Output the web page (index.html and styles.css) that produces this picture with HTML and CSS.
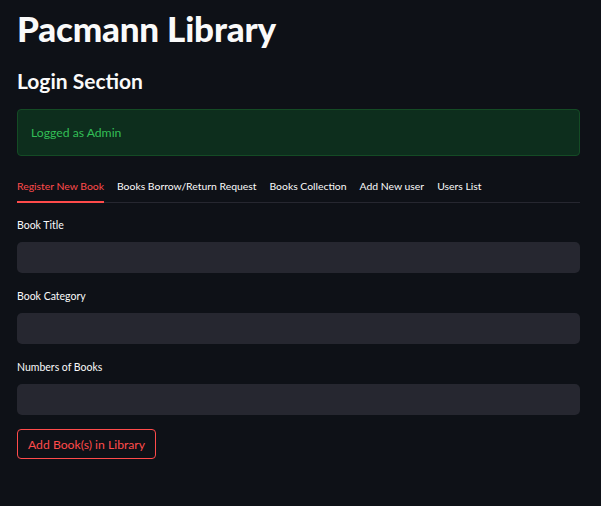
FILE: index.html
```html
<!DOCTYPE html>
<html>
<head>
<meta charset="utf-8">
<link rel="stylesheet" href="styles.css">
</head>
<body>
<main class="page">
  <h1 class="title">Pacmann Library</h1>
  <h3 class="subheader">Login Section</h3>
  <div class="alert">Logged as Admin</div>
  <div class="tabs">
    <div class="tab active">Register New Book</div>
    <div class="tab">Books Borrow/Return Request</div>
    <div class="tab">Books Collection</div>
    <div class="tab">Add New user</div>
    <div class="tab">Users List</div>
  </div>
  <div class="form">
    <label class="field">
      <span class="label">Book Title</span>
      <input class="input" type="text">
    </label>
    <label class="field">
      <span class="label">Book Category</span>
      <input class="input" type="text">
    </label>
    <label class="field">
      <span class="label">Numbers of Books</span>
      <input class="input" type="text">
    </label>
    <div class="actions">
      <button class="btn">Add Book(s) in Library</button>
    </div>
  </div>
</main>
</body>
</html>
```
FILE: styles.css
```css
html, body {
  margin: 0;
  padding: 0;
  background: #0e1117;
  height: 100%;
}
body {
  font-family: Lato, "Noto Sans", sans-serif;
  color: #fafafa;
}
.page {
  display: flex;
  flex-direction: column;
  padding: 0 21px 0 17px;
}
.title {
  margin: 0;
  padding-top: 5px;
  font-size: 35px;
  line-height: 46px;
  font-weight: 900;
  letter-spacing: -0.2px;
}
.subheader {
  margin: 17px 0 0;
  font-size: 21px;
  line-height: 26px;
  font-weight: 700;
}
.alert {
  margin-top: 15px;
  height: 47px;
  box-sizing: border-box;
  display: flex;
  align-items: center;
  padding: 0 13px;
  background: #0d2e1d;
  border: 1px solid #144b25;
  border-radius: 4px;
  color: #33bf57;
  font-size: 12.2px;
}
.tabs {
  margin-top: 16px;
  display: flex;
  gap: 13px;
  border-bottom: 1px solid #262730;
}
.tab {
  font-size: 10.4px;
  line-height: 14px;
  padding: 7px 0 8px;
  color: #fafafa;
  border-bottom: 2px solid transparent;
  margin-bottom: -1px;
}
.tab.active {
  color: #ff4b4b;
  border-bottom-color: #ff4b4b;
}
.form {
  display: flex;
  flex-direction: column;
  padding-top: 15px;
}
.field {
  display: flex;
  flex-direction: column;
  gap: 10px;
  margin-bottom: 16px;
}
.label {
  font-size: 10.5px;
  line-height: 14px;
  color: #fafafa;
}
.input {
  height: 31px;
  box-sizing: border-box;
  border: none;
  border-radius: 5px;
  background: #262730;
  outline: none;
  padding: 0 10px;
  color: #fafafa;
}
.actions {
  display: flex;
  margin-top: -2px;
}
.btn {
  height: 30px;
  padding: 0 10px;
  background: #0e1117;
  border: 1px solid #ff4b4b;
  border-radius: 4px;
  color: #ff4b4b;
  font-family: inherit;
  font-size: 12.2px;
}
```
